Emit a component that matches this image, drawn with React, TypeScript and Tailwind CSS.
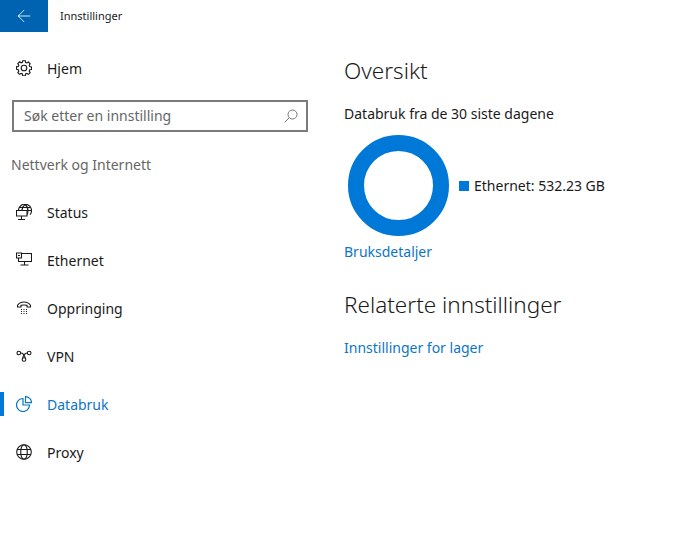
import { ArrowLeft } from 'lucide-react';
import type { ReactNode } from 'react';

function Glyph({ children }: { children: ReactNode }) {
  return (
    <svg width="16" height="16" viewBox="0 0 16 16" fill="none" stroke="currentColor" strokeWidth="1.100">
      {children}
    </svg>
  );
}

const icons: Record<string, ReactNode> = {
  home: (
    <Glyph>
      <circle cx="8" cy="8" r="2.800" />
      <path d="M6.700.700h2.600l.3 1.800 1.300.5 1.500-1 1.800 1.800-1 1.500.5 1.300 1.800.3v2.600l-1.800.3-.5 1.300 1 1.500-1.800 1.800-1.500-1-1.300.5-.3 1.800H6.700l-.3-1.800-1.300-.5-1.500 1-1.800-1.800 1-1.500-.5-1.300L.500 9.300V6.700l1.800-.3.5-1.300-1-1.500 1.800-1.800 1.500 1 1.300-.5z" />
    </Glyph>
  ),
  status: (
    <Glyph>
      <path d="M2.500 6.500a6.500 6.500 0 1 1 11.500 4.200M9 .500C7 2 6 4 5.800 6.500M9 .500c2 1.500 3 3.500 3 6 0 1.500-.3 3-.8 4M3.800 3.500h10.400M1 6.500h14.500" />
      <path d="M.500 6.500h10.500v5.500H.500zM5.500 12v3M2 15.500h7" />
    </Glyph>
  ),
  ethernet: (
    <Glyph>
      <path d="M5.500 1.500h10v8H2.500V6" />
      <path d="M.500 1h5v5h-5zM2 3.500h2M8.500 9.500v3.500M4.500 13h8" />
    </Glyph>
  ),
  dial: (
    <Glyph>
      <path d="M1.500 7V5.300C3 3 5 2 8 2s5 1 6.500 3.300V7H11V5.300C10 4.800 6 4.800 5 5.300V7z" />
      <path d="M5 9.500h1M7.500 9.500h1M10 9.500h1M5 11.500h1M7.500 11.500h1M10 11.500h1M5 13.500h1M7.500 13.500h1M10 13.500h1" />
    </Glyph>
  ),
  vpn: (
    <Glyph>
      <circle cx="2.800" cy="5" r="1.800" />
      <circle cx="13.200" cy="5" r="1.800" />
      <circle cx="8" cy="11.500" r="1.800" />
      <path d="M4.600 5c2 0 3.500 1 4.700 5M11.400 5c-2 0-3.500 1-4.700 5" />
    </Glyph>
  ),
  data: (
    <Glyph>
      <path d="M7 2.500a6.500 6.500 0 1 0 6.500 6.500H7z" strokeWidth="1.200" />
      <path d="M9.500.600a6 6 0 0 1 6 6h-6z" strokeWidth="1.200" />
    </Glyph>
  ),
  proxy: (
    <Glyph>
      <circle cx="8" cy="8" r="7.300" />
      <ellipse cx="8" cy="8" rx="3.300" ry="7.300" />
      <path d="M1.200 5.500h13.600M1.200 10.500h13.600" />
    </Glyph>
  ),
};

const navItems = [
  { label: 'Status', icon: 'status' },
  { label: 'Ethernet', icon: 'ethernet' },
  { label: 'Oppringing', icon: 'dial' },
  { label: 'VPN', icon: 'vpn' },
  { label: 'Databruk', icon: 'data', active: true },
  { label: 'Proxy', icon: 'proxy' },
];

function NavRow({ label, icon, active }: { label: string; icon: string; active?: boolean }) {
  return (
    <div className={`relative flex h-12 items-center gap-[15px] pl-4 text-[14px] ${active ? 'text-[#0d76c4]' : 'text-[#1a1a1a]'}`}>
      {active && <div className="absolute left-0 top-3 h-6 w-1 bg-[#0078d7]" />}
      {icons[icon]}
      <span>{label}</span>
    </div>
  );
}

export default function App() {
  return (
    <div className="flex h-[549px] w-[676px] flex-col overflow-hidden bg-white font-['Noto_Sans',sans-serif] text-[#1a1a1a]">
      {/* title bar */}
      <div className="flex h-8 items-center">
        <div className="flex h-8 w-12 items-center justify-center bg-[#0063b1] text-white">
          <ArrowLeft size={20} strokeWidth={1} />
        </div>
        <span className="ml-3 text-[11px]">Innstillinger</span>
      </div>

      <div className="flex flex-1">
        {/* sidebar */}
        <div className="w-[344px] shrink-0">
          <div className="mt-[12px]">
            <NavRow label="Hjem" icon="home" />
          </div>
          <div className="ml-3 mt-[8px] flex h-8 w-[296px] items-center justify-between border-2 border-[#7a7a7a] pb-[2px] pl-[10px] pr-2 text-[14px] text-[#666]">
            <span>Søk etter en innstilling</span>
            <svg width="14" height="14" viewBox="0 0 14 14" fill="none" stroke="#777" strokeWidth="1" className="mt-[2px]">
              <circle cx="8.500" cy="5.500" r="4.500" />
              <path d="M5.300 8.700.700 13.300" />
            </svg>
          </div>
          <div className="ml-[11px] mt-[23px] h-5 text-[14px] leading-5 text-[#666]">Nettverk og Internett</div>
          <div className="mt-[13px]">
            {navItems.map((item) => (
              <NavRow key={item.label} {...item} />
            ))}
          </div>
        </div>

        {/* content */}
        <div className="flex-1">
          <h1 className="mt-[23px] h-8 text-[22.500px] font-light leading-8">Oversikt</h1>
          <p className="mt-[17px] h-5 text-[14px] leading-5">Databruk fra de 30 siste dagene</p>
          <div className="mt-[11px] flex items-center">
            <div className="ml-1 size-[101px] rounded-full border-[16px] border-[#0078d7]" />
            <div className="ml-[10px] size-[10px] bg-[#0078d7]" />
            <span className="ml-[5px] text-[14px]">Ethernet: 532.23 GB</span>
          </div>
          <p className="mt-[6px] h-5 text-[14px] leading-5 text-[#0d76c4]">Bruksdetaljer</p>
          <h2 className="mt-[27px] h-8 text-[22.500px] font-light leading-8">Relaterte innstillinger</h2>
          <p className="mt-[17px] h-5 text-[14px] leading-5 text-[#0d76c4]">Innstillinger for lager</p>
        </div>
      </div>
    </div>
  );
}
